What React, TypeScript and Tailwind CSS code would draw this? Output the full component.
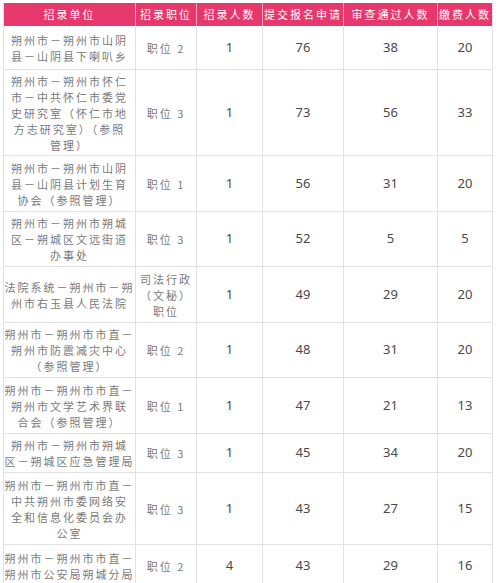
import React from "react";

type Row = {
  unit: string[];
  pos: string[];
  h: string;
  a: string;
  b: string;
  c: string;
  d: string;
};

const rows: Row[] = [
  { unit: ["朔州市－朔州市山阴", "县－山阴县下喇叭乡"], pos: ["职位 2"], h: "h-[44px]", a: "1", b: "76", c: "38", d: "20" },
  { unit: ["朔州市－朔州市怀仁", "市－中共怀仁市委党", "史研究室（怀仁市地", "方志研究室）（参照", "管理）"], pos: ["职位 3"], h: "h-[86px]", a: "1", b: "73", c: "56", d: "33" },
  { unit: ["朔州市－朔州市山阴", "县－山阴县计划生育", "协会（参照管理）"], pos: ["职位 1"], h: "h-[56px]", a: "1", b: "56", c: "31", d: "20" },
  { unit: ["朔州市－朔州市朔城", "区－朔城区文远街道", "办事处"], pos: ["职位 3"], h: "h-[55px]", a: "1", b: "52", c: "5", d: "5" },
  { unit: ["法院系统－朔州市－朔", "州市右玉县人民法院"], pos: ["司法行政", "（文秘）", "职位"], h: "h-[56px]", a: "1", b: "49", c: "29", d: "20" },
  { unit: ["朔州市－朔州市市直－", "朔州市防震减灾中心", "（参照管理）"], pos: ["职位 2"], h: "h-[55px]", a: "1", b: "48", c: "31", d: "20" },
  { unit: ["朔州市－朔州市市直－", "朔州市文学艺术界联", "合会（参照管理）"], pos: ["职位 1"], h: "h-[56px]", a: "1", b: "47", c: "21", d: "13" },
  { unit: ["朔州市－朔州市朔城", "区－朔城区应急管理局"], pos: ["职位 3"], h: "h-[39px]", a: "1", b: "45", c: "34", d: "20" },
  { unit: ["朔州市－朔州市市直－", "中共朔州市委网络安", "全和信息化委员会办", "公室"], pos: ["职位 3"], h: "h-[72px]", a: "1", b: "43", c: "27", d: "15" },
  { unit: ["朔州市－朔州市市直－", "朔州市公安局朔城分局"], pos: ["职位 2"], h: "h-[42px]", a: "4", b: "43", c: "29", d: "16" },
];

const headers = ["招录单位", "招录职位", "招录人数", "提交报名申请", "审查通过人数", "缴费人数"];

function TextCell({ h, lines }: { h: string; lines: string[] }) {
  return (
    <div
      className={
        h +
        " flex flex-col items-center justify-center border-r border-b border-[#e2e2e2] font-['Noto_Sans_CJK_SC',sans-serif] text-[11px] leading-[16px] tracking-[2px] text-[#7a7a7a] whitespace-nowrap"
      }
    >
      {lines.map((l, i) => (
        <span key={i}>{l}</span>
      ))}
    </div>
  );
}

function NumCell({ h, v }: { h: string; v: string }) {
  return (
    <div
      className={
        h +
        " flex items-center justify-center border-r border-b border-[#e2e2e2] font-['Noto_Sans','Liberation_Sans',sans-serif] text-[13px] text-[#4a4a4a]"
      }
    >
      {v}
    </div>
  );
}

export default function App() {
  return (
    <div className="w-[500px] h-[583px] overflow-hidden bg-white pt-[3px] pl-[3px]">
      <div className="grid grid-cols-[132px_61px_66px_81px_94px_55px] w-[490px] border-l border-[#e2e2e2]">
        {headers.map((t, i) => (
          <div
            key={t}
            className={
              (i < 5 ? "border-[#f3a5bd]" : "border-[#e2e2e2]") +
              " h-[23px] flex items-center justify-center border-r bg-[#e6386c] text-white font-['Noto_Sans_CJK_SC',sans-serif] text-[11px] tracking-[2px] whitespace-nowrap"
            }
          >
            {t}
          </div>
        ))}
        {rows.map((r, ri) => (
          <React.Fragment key={ri}>
            <TextCell h={r.h} lines={r.unit} />
            <TextCell h={r.h} lines={r.pos} />
            <NumCell h={r.h} v={r.a} />
            <NumCell h={r.h} v={r.b} />
            <NumCell h={r.h} v={r.c} />
            <NumCell h={r.h} v={r.d} />
          </React.Fragment>
        ))}
      </div>
    </div>
  );
}
